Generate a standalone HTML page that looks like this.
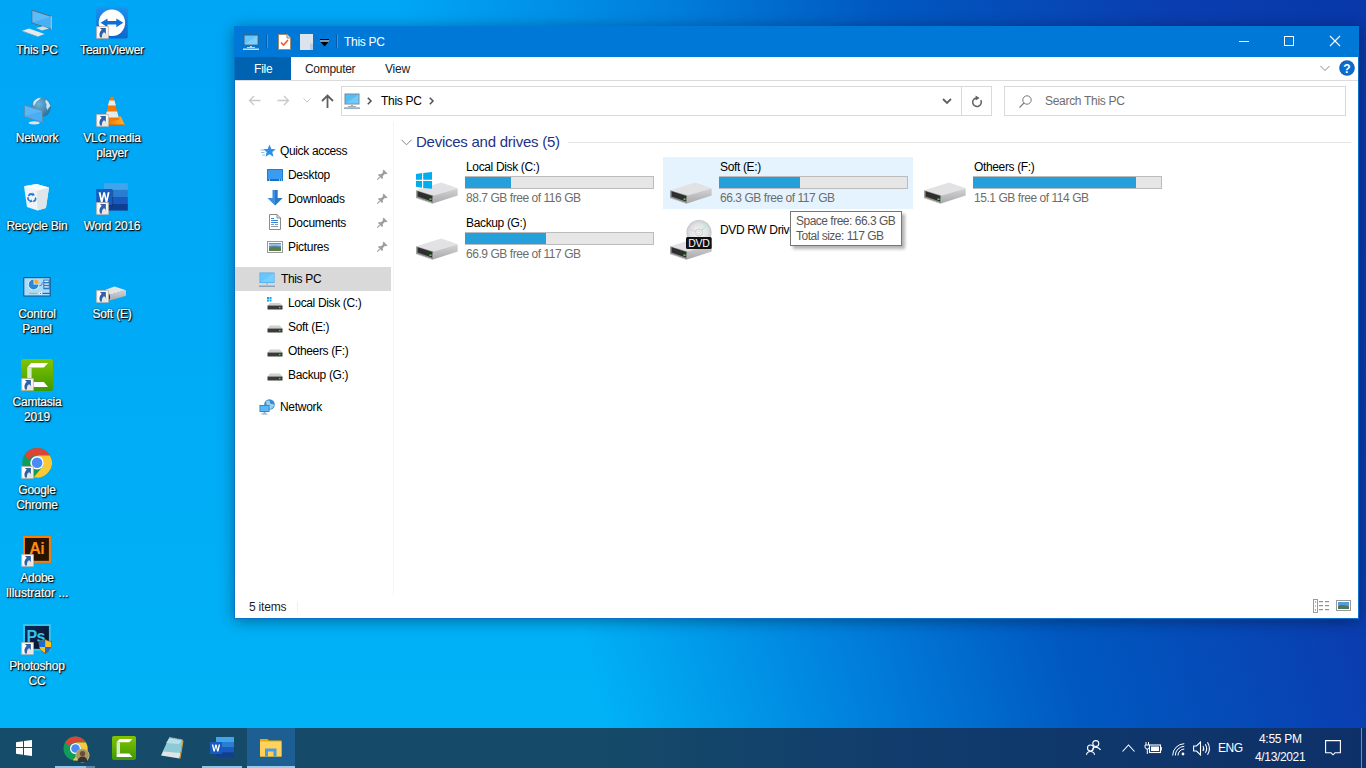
<!DOCTYPE html>
<html><head><meta charset="utf-8">
<style>
*{margin:0;padding:0;box-sizing:border-box}
html,body{width:1366px;height:768px;overflow:hidden}
body{position:relative;font-family:"Liberation Sans",sans-serif;font-size:12px;color:#000;
background:linear-gradient(74deg,rgba(0,160,240,0) 0px,rgba(0,160,240,0) 596px,#0080dc 845px,#0058c0 1057px,#0a3eb0 1332px,#0838aa 1525px),
linear-gradient(180deg,#00a6f6 0px,#00aaf6 300px,#00b2f6 728px);}
.a{position:absolute}
.t{position:absolute;white-space:nowrap;line-height:14px}
.dl{position:absolute;width:76px;text-align:center;color:#fff;font-size:12px;line-height:15px;letter-spacing:-0.2px;
 text-shadow:1px 1px 1px rgba(0,0,0,.95),0 0 2px rgba(0,0,0,.75),1px 1px 2px rgba(0,0,0,.6);-webkit-text-stroke:0.2px #fff}
svg{position:absolute;overflow:visible}
#win{left:234px;top:26px;width:1125px;height:593px;background:#fff;border:1px solid #0a72cc;
 box-shadow:0 2px 14px rgba(0,0,0,.38)}
#title{left:234px;top:26px;width:1125px;height:31px;background:#0078d7}
#tb{left:0;top:728px;width:1366px;height:40px;
 background:linear-gradient(90deg,#154c6a 0px,#154a68 600px,#113c6c 900px,#0d3068 1366px)}
.nav{color:#000}
.gray{color:#6d6d6d}
</style></head><body>

<!-- WINDOW -->
<div class="a" id="win"></div>
<div class="a" id="title"></div>
<!-- title icons -->
<svg style="left:243px;top:34px" width="16" height="16" viewBox="0 0 16 16">
 <rect x="0.5" y="0.5" width="15" height="11" fill="#4c5c6a"/>
 <rect x="1.5" y="1.5" width="13" height="9" fill="#62c6ff"/>
 <path d="M1.5 10.5 L14.5 1.5 L14.5 10.5Z" fill="#8fd8ff" opacity=".6"/>
 <rect x="7" y="12" width="2" height="1.5" fill="#c9d0d6"/>
 <rect x="4" y="13" width="8" height="1" fill="#c9d0d6"/>
 <rect x="0" y="14.5" width="16" height="1.5" fill="#d6dbe0"/>
</svg>
<div class="a" style="left:266px;top:35px;width:2px;height:13px;background:#0a5aa8;border-right:1px solid #3f95e0"></div>
<svg style="left:278px;top:34px" width="13" height="16" viewBox="0 0 13 16">
 <path d="M0.5 0.5 H9 L12.5 4 V15.5 H0.5Z" fill="#fff" stroke="#a08a70"/>
 <path d="M9 0.5 V4 H12.5" fill="#e0e0e0" stroke="#a08a70"/>
 <path d="M3 8.5 L5.5 11 L10 6" fill="none" stroke="#f05a28" stroke-width="1.6"/>
</svg>
<svg style="left:300px;top:34px" width="14" height="16" viewBox="0 0 14 16">
 <rect x="0" y="0" width="13" height="16" fill="#dbe3ee"/>
 <rect x="10" y="9.5" width="3" height="6.5" fill="#c2ccd9"/>
</svg>
<svg style="left:320px;top:39px" width="9" height="8" viewBox="0 0 9 8">
 <rect x="0" y="0" width="9" height="1.5" fill="#000"/>
 <rect x="0" y="1.5" width="9" height="0.8" fill="#fff"/>
 <path d="M0.5 3 H8.5 L4.5 7.5Z" fill="#000"/>
</svg>
<div class="a" style="left:336px;top:35px;width:2px;height:13px;background:#0a5aa8;border-right:1px solid #3f95e0"></div>
<div class="t" style="left:344px;top:35px;color:#fff;letter-spacing:-0.3px">This PC</div>
<!-- caption buttons -->
<div class="a" style="left:1239px;top:41px;width:10px;height:1px;background:#fff"></div>
<div class="a" style="left:1284px;top:36px;width:10px;height:10px;border:1px solid #fff"></div>
<svg style="left:1330px;top:36px" width="10" height="10" viewBox="0 0 10 10"><path d="M0 0L10 10M10 0L0 10" stroke="#fff" stroke-width="1.1"/></svg>

<!-- ribbon tabs -->
<div class="a" style="left:235px;top:57px;width:56px;height:23px;background:#0063b1"></div>
<div class="t" style="left:254px;top:62px;color:#fff;letter-spacing:-0.2px">File</div>
<div class="t" style="left:305px;top:62px;color:#222;letter-spacing:-0.3px">Computer</div>
<div class="t" style="left:385px;top:62px;color:#222;letter-spacing:-0.2px">View</div>
<div class="a" style="left:235px;top:80px;width:1123px;height:1px;background:#dadbdc"></div>
<svg style="left:1320px;top:65px" width="10" height="7" viewBox="0 0 10 7"><path d="M0.5 1 L5 5.5 L9.5 1" fill="none" stroke="#8a8a8a" stroke-width="1"/></svg>
<svg style="left:1339px;top:60px" width="16" height="16" viewBox="0 0 16 16">
 <circle cx="8" cy="8" r="7.8" fill="#1a5fb4"/><circle cx="8" cy="8" r="6.8" fill="#0a6cd0"/>
 <text x="8" y="12.5" font-family="Liberation Sans" font-weight="bold" font-size="12" fill="#fff" text-anchor="middle">?</text>
</svg>

<!-- address row -->
<svg style="left:248px;top:95px" width="13" height="11" viewBox="0 0 13 11"><path d="M12.5 5.5H1.5M6 1L1.5 5.5L6 10" fill="none" stroke="#c8c8c8" stroke-width="1.3"/></svg>
<svg style="left:277px;top:95px" width="13" height="11" viewBox="0 0 13 11"><path d="M0.5 5.5H11.5M7 1L11.5 5.5L7 10" fill="none" stroke="#c8c8c8" stroke-width="1.3"/></svg>
<svg style="left:303px;top:98px" width="8" height="5" viewBox="0 0 8 5"><path d="M0.5 0.5L4 4L7.5 0.5" fill="none" stroke="#c8c8c8" stroke-width="1"/></svg>
<svg style="left:321px;top:94px" width="13" height="14" viewBox="0 0 13 14"><path d="M6.5 14V1.5M1 7L6.5 1.5L12 7" fill="none" stroke="#5f5f5f" stroke-width="1.8"/></svg>
<div class="a" style="left:341px;top:86px;width:651px;height:30px;border:1px solid #d9d9d9"></div>
<div class="a" style="left:961px;top:87px;width:1px;height:28px;background:#d9d9d9"></div>
<svg style="left:344px;top:93px" width="16" height="16" viewBox="0 0 16 16">
 <rect x="0.5" y="0.5" width="15" height="11" fill="#7a8894"/>
 <rect x="1.5" y="1.5" width="13" height="9" fill="#53bdf5"/>
 <path d="M1.5 10.5 L14.5 1.5 L14.5 10.5Z" fill="#8fd8ff" opacity=".5"/>
 <rect x="7" y="12" width="2" height="1" fill="#a0aab4"/>
 <rect x="4" y="13" width="8" height="1" fill="#a0aab4"/>
 <rect x="0" y="14.5" width="16" height="1.2" fill="#6a8aa8"/>
</svg>
<svg style="left:367px;top:97px" width="5" height="8" viewBox="0 0 5 8"><path d="M0.8 0.8L4 4L0.8 7.2" fill="none" stroke="#505050" stroke-width="1.5"/></svg>
<div class="t" style="left:381px;top:94px;color:#000;letter-spacing:-0.3px">This PC</div>
<svg style="left:429px;top:97px" width="5" height="8" viewBox="0 0 5 8"><path d="M0.8 0.8L4 4L0.8 7.2" fill="none" stroke="#505050" stroke-width="1.5"/></svg>
<svg style="left:942px;top:98px" width="10" height="7" viewBox="0 0 10 7"><path d="M1 1L5 5L9 1" fill="none" stroke="#606060" stroke-width="1.8"/></svg>
<svg style="left:971px;top:96px" width="12" height="12" viewBox="0 0 12 12"><path d="M9.8 4.2 A4.3 4.3 0 1 1 5.6 1.9" fill="none" stroke="#606060" stroke-width="1.5"/><path d="M4.6 -0.6 L8.6 1.9 L4.6 4.4Z" fill="#606060"/></svg>
<div class="a" style="left:1004px;top:86px;width:342px;height:30px;border:1px solid #d9d9d9"></div>
<svg style="left:1019px;top:95px" width="13" height="13" viewBox="0 0 13 13"><circle cx="8" cy="5" r="4.2" fill="none" stroke="#7a7a7a" stroke-width="1"/><path d="M5 8L0.5 12.5" stroke="#7a7a7a" stroke-width="1.1"/></svg>
<div class="t" style="left:1045px;top:94px;color:#6d6d6d;letter-spacing:-0.3px">Search This PC</div>


<!-- NAV PANE -->
<div class="a" style="left:393px;top:122px;width:1px;height:473px;background:#f4f4f4"></div>
<svg style="left:260px;top:144px" width="16" height="14" viewBox="0 0 16 14">
 <path d="M9.5 0.5 L11.3 5 L15.8 5.2 L12.3 8.1 L13.5 12.8 L9.5 10.2 L5.5 12.8 L6.7 8.1 L3.2 5.2 L7.7 5Z" fill="#2f8de4"/>
 <path d="M0.5 6 H4 M1 8.5 H4.5 M2 11 H5" stroke="#6fb6f0" stroke-width="0.8"/>
</svg>
<div class="t" style="left:280px;top:144px;letter-spacing:-0.35px">Quick access</div>

<svg style="left:267px;top:169px" width="16" height="12" viewBox="0 0 16 12">
 <rect x="0" y="0" width="16" height="12" fill="#1a7fd6"/>
 <rect x="1" y="1" width="14" height="9.5" fill="#3a9cf0"/>
 <rect x="1" y="10.5" width="14" height="1" fill="#0d5aa8"/>
 <rect x="12" y="10.5" width="1" height="1" fill="#fff"/><rect x="14" y="10.5" width="1" height="1" fill="#fff"/><rect x="2" y="10.5" width="1" height="1" fill="#fff"/>
</svg>
<div class="t" style="left:288px;top:168px;letter-spacing:-0.3px">Desktop</div>
<svg style="left:267px;top:190px" width="16" height="16" viewBox="0 0 16 16">
 <path d="M5.5 0 H10.5 V8 H15.5 L8 15.5 L0.5 8 H5.5Z" fill="#3d8ee0"/>
 <path d="M8 0 H10.5 V8 H15.5 L8 15.5Z" fill="#2a78cc"/>
</svg>
<div class="t" style="left:288px;top:192px;letter-spacing:-0.3px">Downloads</div>
<svg style="left:269px;top:214px" width="12" height="16" viewBox="0 0 12 16">
 <path d="M0.5 0.5 H8 L11.5 4 V15.5 H0.5Z" fill="#fff" stroke="#8a8a8a"/>
 <path d="M8 0.5 V4 H11.5" fill="none" stroke="#8a8a8a"/>
 <rect x="2" y="4" width="3" height="1" fill="#3a86d8"/><rect x="2" y="6" width="7" height="1" fill="#3a86d8"/>
 <rect x="2" y="8" width="7" height="1" fill="#3a86d8"/><rect x="2" y="10" width="3" height="1" fill="#8a9aa8"/>
 <rect x="6" y="10" width="3" height="1" fill="#8a9aa8"/><rect x="2" y="12" width="7" height="1" fill="#8a9aa8"/>
</svg>
<div class="t" style="left:288px;top:216px;letter-spacing:-0.3px">Documents</div>
<svg style="left:267px;top:241px" width="16" height="12" viewBox="0 0 16 12">
 <rect x="0.5" y="0.5" width="15" height="11" fill="#fff" stroke="#9a9a9a"/>
 <rect x="2" y="2" width="12" height="8" fill="#5c8fc8"/>
 <path d="M2 7 Q6 4.5 14 6.5 V10 H2Z" fill="#5d7d4a"/>
 <path d="M2 3 H14 V5 Q8 4 2 5Z" fill="#9cc4ec"/>
</svg>
<div class="t" style="left:288px;top:240px;letter-spacing:-0.3px">Pictures</div>
<svg style="left:377px;top:169px" width="11" height="11" viewBox="0 0 11 11"><path d="M6.5 0.5 L10.5 4.5 L9.3 5.2 L7.8 5 L5.8 7 L6 9 L5 10 L1 6 L2 5 L4 5.2 L6 3.2 L5.8 1.7Z" fill="#9aa0a6"/><path d="M2.8 8.2 L0.3 10.7" stroke="#9aa0a6" stroke-width="1.2"/></svg>
<svg style="left:377px;top:193px" width="11" height="11" viewBox="0 0 11 11"><path d="M6.5 0.5 L10.5 4.5 L9.3 5.2 L7.8 5 L5.8 7 L6 9 L5 10 L1 6 L2 5 L4 5.2 L6 3.2 L5.8 1.7Z" fill="#9aa0a6"/><path d="M2.8 8.2 L0.3 10.7" stroke="#9aa0a6" stroke-width="1.2"/></svg>
<svg style="left:377px;top:217px" width="11" height="11" viewBox="0 0 11 11"><path d="M6.5 0.5 L10.5 4.5 L9.3 5.2 L7.8 5 L5.8 7 L6 9 L5 10 L1 6 L2 5 L4 5.2 L6 3.2 L5.8 1.7Z" fill="#9aa0a6"/><path d="M2.8 8.2 L0.3 10.7" stroke="#9aa0a6" stroke-width="1.2"/></svg>
<svg style="left:377px;top:241px" width="11" height="11" viewBox="0 0 11 11"><path d="M6.5 0.5 L10.5 4.5 L9.3 5.2 L7.8 5 L5.8 7 L6 9 L5 10 L1 6 L2 5 L4 5.2 L6 3.2 L5.8 1.7Z" fill="#9aa0a6"/><path d="M2.8 8.2 L0.3 10.7" stroke="#9aa0a6" stroke-width="1.2"/></svg>
<div class="a" style="left:235px;top:267px;width:156px;height:24px;background:#d9d9d9"></div>
<svg style="left:259px;top:272px" width="16" height="15" viewBox="0 0 16 15">
 <rect x="0.5" y="0.5" width="15" height="10.5" fill="#4aa8e8"/>
 <rect x="1.2" y="1.2" width="13.6" height="9" fill="#66c6ff"/>
 <path d="M1.2 10.2 L14.8 1.2 V10.2Z" fill="#86d4ff" opacity=".6"/>
 <rect x="7" y="11.5" width="2" height="1.2" fill="#a8b4c0"/>
 <rect x="0" y="13.6" width="16" height="1.2" fill="#7a96b4"/>
</svg>
<div class="t" style="left:281px;top:272px;letter-spacing:-0.35px">This PC</div>
<svg style="left:267px;top:297px" width="16" height="13" viewBox="0 0 16 13">
 <rect x="0" y="0" width="2" height="2" fill="#1aa0f0"/><rect x="2.5" y="0" width="2" height="2" fill="#1aa0f0"/>
 <rect x="0" y="2.5" width="2" height="2" fill="#1aa0f0"/><rect x="2.5" y="2.5" width="2" height="2" fill="#1aa0f0"/>
 <path d="M3 6 H13 L15.5 8.5 H0.5Z" fill="#cfcfcf"/>
 <rect x="0.5" y="8.5" width="15" height="4" fill="#3a3a3a"/>
 <rect x="12" y="10" width="1.5" height="1.2" fill="#3ce03c"/>
</svg>
<div class="t" style="left:288px;top:296px;letter-spacing:-0.35px">Local Disk (C:)</div>
<svg style="left:267px;top:325px" width="16" height="8" viewBox="0 0 16 8"><path d="M3 0.5 H13 L15.5 3.5 H0.5Z" fill="#cfcfcf"/><rect x="0.5" y="3.5" width="15" height="4" fill="#3a3a3a"/><rect x="12" y="5" width="1.5" height="1.2" fill="#3ce03c"/></svg>
<svg style="left:267px;top:349px" width="16" height="8" viewBox="0 0 16 8"><path d="M3 0.5 H13 L15.5 3.5 H0.5Z" fill="#cfcfcf"/><rect x="0.5" y="3.5" width="15" height="4" fill="#3a3a3a"/><rect x="12" y="5" width="1.5" height="1.2" fill="#3ce03c"/></svg>
<svg style="left:267px;top:373px" width="16" height="8" viewBox="0 0 16 8"><path d="M3 0.5 H13 L15.5 3.5 H0.5Z" fill="#cfcfcf"/><rect x="0.5" y="3.5" width="15" height="4" fill="#3a3a3a"/><rect x="12" y="5" width="1.5" height="1.2" fill="#3ce03c"/></svg>
<div class="t" style="left:288px;top:320px;letter-spacing:-0.3px">Soft (E:)</div>
<div class="t" style="left:288px;top:344px;letter-spacing:-0.35px">Otheers (F:)</div>
<div class="t" style="left:288px;top:368px;letter-spacing:-0.35px">Backup (G:)</div>
<svg style="left:259px;top:399px" width="16" height="16" viewBox="0 0 16 16">
 <circle cx="10.5" cy="5.5" r="5.3" fill="#3a8cc8"/>
 <path d="M7 2.5 Q9 1 11 2 Q10 4 12 5 Q14 4.5 15.5 6 Q14 9 11 10.5 Q10 8 8 8.5Z" fill="#b8e0f8" opacity=".8"/>
 <rect x="0.5" y="6" width="10" height="7" fill="#1e80d8"/>
 <rect x="1.3" y="6.8" width="8.4" height="5.4" fill="#5ab8f8"/>
 <rect x="4.5" y="13" width="2" height="1.5" fill="#8aa0b4"/>
 <rect x="2.5" y="14.5" width="6" height="1" fill="#8aa0b4"/>
</svg>
<div class="t" style="left:280px;top:400px;letter-spacing:-0.3px">Network</div>

<!-- CONTENT -->
<div class="t" style="left:416px;top:133px;font-size:15px;line-height:18px;color:#1e3287;letter-spacing:-0.25px">Devices and drives (5)</div>
<svg style="left:401px;top:139px" width="11" height="7" viewBox="0 0 11 7"><path d="M0.5 0.8 L5.5 5.8 L10.5 0.8" fill="none" stroke="#858585" stroke-width="1"/></svg>
<div class="a" style="left:568px;top:142px;width:783px;height:1px;background:#e5e5e5"></div>
<div class="a" style="left:663px;top:157px;width:250px;height:52px;background:#e5f3ff"></div>
<svg style="left:415px;top:181px" width="44" height="24" viewBox="0 0 44 24">
 <defs><linearGradient id="rf" x1="0" y1="0" x2="0" y2="1"><stop offset="0" stop-color="#d4d4d6"/><stop offset="1" stop-color="#a9a9ab"/></linearGradient></defs>
 <path d="M1.2 9.2 L26.2 1.5 L42.7 7.3 L18.5 14.6Z" fill="#e2e2e4"/>
 <path d="M18.5 14.6 L42.7 7.3 L42.7 14.6 L18 22.5Z" fill="url(#rf)"/>
 <path d="M1.2 9.2 L18.5 14.6 L18 22.5 L1.2 16.7Z" fill="#8c8c8c"/>
 <path d="M2.6 10.3 L17.2 14.9 L17 20.6 L2.6 15.6Z" fill="#2e2e2e"/>
 <path d="M1.2 16.7 L18 22.5 L18 23 L1.2 17.3Z" fill="#b8b8b8"/>
 <rect x="14.5" y="17.4" width="2" height="1.6" fill="#2ee82e"/>
</svg>
<svg style="left:416px;top:172px" width="17" height="17" viewBox="0 0 17 17">
 <path d="M0 2 L6 1 V7.8 H0Z M7.2 0.9 L16 0 V7.8 H7.2Z M0 9 H6 V15.8 L0 14.8Z M7.2 9 H16 V16.8 L7.2 16Z" fill="#00adef"/>
</svg>
<div class="t" style="left:466px;top:160px;letter-spacing:-0.35px">Local Disk (C:)</div>
<div class="a" style="left:465px;top:176px;width:189px;height:13px;background:#e6e6e6;border:1px solid #bcbcbc"><div class="a" style="left:-1px;top:0;width:46px;height:11px;background:#26a0da"></div></div>
<div class="t gray" style="left:466px;top:191px;letter-spacing:-0.45px">88.7 GB free of 116 GB</div>
<svg style="left:669px;top:181px" width="44" height="24" viewBox="0 0 44 24">
 <defs><linearGradient id="rf" x1="0" y1="0" x2="0" y2="1"><stop offset="0" stop-color="#d4d4d6"/><stop offset="1" stop-color="#a9a9ab"/></linearGradient></defs>
 <path d="M1.2 9.2 L26.2 1.5 L42.7 7.3 L18.5 14.6Z" fill="#e2e2e4"/>
 <path d="M18.5 14.6 L42.7 7.3 L42.7 14.6 L18 22.5Z" fill="url(#rf)"/>
 <path d="M1.2 9.2 L18.5 14.6 L18 22.5 L1.2 16.7Z" fill="#8c8c8c"/>
 <path d="M2.6 10.3 L17.2 14.9 L17 20.6 L2.6 15.6Z" fill="#2e2e2e"/>
 <path d="M1.2 16.7 L18 22.5 L18 23 L1.2 17.3Z" fill="#b8b8b8"/>
 <rect x="14.5" y="17.4" width="2" height="1.6" fill="#2ee82e"/>
</svg>
<div class="t" style="left:720px;top:160px;letter-spacing:-0.35px">Soft (E:)</div>
<div class="a" style="left:719px;top:176px;width:189px;height:13px;background:#e6e6e6;border:1px solid #bcbcbc"><div class="a" style="left:-1px;top:0;width:81px;height:11px;background:#26a0da"></div></div>
<div class="t gray" style="left:720px;top:191px;letter-spacing:-0.45px">66.3 GB free of 117 GB</div>
<svg style="left:923px;top:181px" width="44" height="24" viewBox="0 0 44 24">
 <defs><linearGradient id="rf" x1="0" y1="0" x2="0" y2="1"><stop offset="0" stop-color="#d4d4d6"/><stop offset="1" stop-color="#a9a9ab"/></linearGradient></defs>
 <path d="M1.2 9.2 L26.2 1.5 L42.7 7.3 L18.5 14.6Z" fill="#e2e2e4"/>
 <path d="M18.5 14.6 L42.7 7.3 L42.7 14.6 L18 22.5Z" fill="url(#rf)"/>
 <path d="M1.2 9.2 L18.5 14.6 L18 22.5 L1.2 16.7Z" fill="#8c8c8c"/>
 <path d="M2.6 10.3 L17.2 14.9 L17 20.6 L2.6 15.6Z" fill="#2e2e2e"/>
 <path d="M1.2 16.7 L18 22.5 L18 23 L1.2 17.3Z" fill="#b8b8b8"/>
 <rect x="14.5" y="17.4" width="2" height="1.6" fill="#2ee82e"/>
</svg>
<div class="t" style="left:974px;top:160px;letter-spacing:-0.35px">Otheers (F:)</div>
<div class="a" style="left:973px;top:176px;width:189px;height:13px;background:#e6e6e6;border:1px solid #bcbcbc"><div class="a" style="left:-1px;top:0;width:163px;height:11px;background:#26a0da"></div></div>
<div class="t gray" style="left:974px;top:191px;letter-spacing:-0.45px">15.1 GB free of 114 GB</div>
<svg style="left:415px;top:237px" width="44" height="24" viewBox="0 0 44 24">
 <defs><linearGradient id="rf" x1="0" y1="0" x2="0" y2="1"><stop offset="0" stop-color="#d4d4d6"/><stop offset="1" stop-color="#a9a9ab"/></linearGradient></defs>
 <path d="M1.2 9.2 L26.2 1.5 L42.7 7.3 L18.5 14.6Z" fill="#e2e2e4"/>
 <path d="M18.5 14.6 L42.7 7.3 L42.7 14.6 L18 22.5Z" fill="url(#rf)"/>
 <path d="M1.2 9.2 L18.5 14.6 L18 22.5 L1.2 16.7Z" fill="#8c8c8c"/>
 <path d="M2.6 10.3 L17.2 14.9 L17 20.6 L2.6 15.6Z" fill="#2e2e2e"/>
 <path d="M1.2 16.7 L18 22.5 L18 23 L1.2 17.3Z" fill="#b8b8b8"/>
 <rect x="14.5" y="17.4" width="2" height="1.6" fill="#2ee82e"/>
</svg>
<div class="t" style="left:466px;top:216px;letter-spacing:-0.35px">Backup (G:)</div>
<div class="a" style="left:465px;top:232px;width:189px;height:13px;background:#e6e6e6;border:1px solid #bcbcbc"><div class="a" style="left:-1px;top:0;width:81px;height:11px;background:#26a0da"></div></div>
<div class="t gray" style="left:466px;top:247px;letter-spacing:-0.45px">66.9 GB free of 117 GB</div>
<svg style="left:669px;top:237px" width="44" height="24" viewBox="0 0 44 24">
 <defs><linearGradient id="rf" x1="0" y1="0" x2="0" y2="1"><stop offset="0" stop-color="#d4d4d6"/><stop offset="1" stop-color="#a9a9ab"/></linearGradient></defs>
 <path d="M1.2 9.2 L26.2 1.5 L42.7 7.3 L18.5 14.6Z" fill="#e2e2e4"/>
 <path d="M18.5 14.6 L42.7 7.3 L42.7 14.6 L18 22.5Z" fill="url(#rf)"/>
 <path d="M1.2 9.2 L18.5 14.6 L18 22.5 L1.2 16.7Z" fill="#8c8c8c"/>
 <path d="M2.6 10.3 L17.2 14.9 L17 20.6 L2.6 15.6Z" fill="#2e2e2e"/>
 <path d="M1.2 16.7 L18 22.5 L18 23 L1.2 17.3Z" fill="#b8b8b8"/>
 <rect x="14.5" y="17.4" width="2" height="1.6" fill="#2ee82e"/>
</svg>
<svg style="left:686px;top:217px" width="26" height="33" viewBox="0 0 26 33">
 <defs><radialGradient id="cd" cx=".5" cy=".5" r=".5"><stop offset="0" stop-color="#f4f6f6"/><stop offset=".7" stop-color="#dfe3e3"/><stop offset="1" stop-color="#c8cccc"/></radialGradient></defs>
 <circle cx="13" cy="15.5" r="12.3" fill="url(#cd)" stroke="#c0c4c4" stroke-width=".6"/>
 <path d="M13 15.5 L21.5 8" stroke="#a8f0d8" stroke-width="1.2"/>
 <path d="M13 15.5 L2.5 12" stroke="#f0c0f0" stroke-width="1.2"/>
 <circle cx="13" cy="15.5" r="3.5" fill="#f0f0f0" stroke="#c4c4c4" stroke-width=".8"/>
 <circle cx="13" cy="15.5" r="1.3" fill="#fff" stroke="#c4c4c4" stroke-width=".6"/>
 <rect x="0" y="20" width="25.7" height="12" rx="1.5" fill="#111"/>
 <text x="12.9" y="30" font-family="Liberation Sans" font-size="10.5" fill="#fff" text-anchor="middle" letter-spacing="-0.3">DVD</text>
</svg>
<div class="t" style="left:720px;top:223px;letter-spacing:-0.35px">DVD RW Drive</div>
<div class="a" style="left:790px;top:211px;width:112px;height:35px;background:#fff;border:1px solid #767676;box-shadow:3px 3px 3px rgba(0,0,0,.3)"></div>
<div class="t" style="left:796px;top:214px;color:#575757;line-height:15px;letter-spacing:-0.5px">Space free: 66.3 GB<br>Total size: 117 GB</div>
<div class="t" style="left:249px;top:600px;color:#1e1e1e;letter-spacing:-0.2px">5 items</div>
<div class="a" style="left:297px;top:601px;width:1px;height:11px;background:#f0f0f0"></div>
<svg style="left:1313px;top:599px" width="17" height="14" viewBox="0 0 17 14">
 <rect x="0.5" y="0.5" width="4" height="13" fill="#fff" stroke="#9a9a9a"/>
 <rect x="2" y="2.5" width="1" height="1" fill="#2a7a4a"/><rect x="2" y="6.5" width="1" height="1" fill="#4a8af0"/><rect x="2" y="10.5" width="1" height="1" fill="#e02020"/>
 <path d="M6 2.7H10M12 2.7H16M6 6.7H10M12 6.7H16M6 10.7H10M12 10.7H16" stroke="#7a7a7a" stroke-width="1"/>
</svg>
<svg style="left:1336px;top:600px" width="15" height="11" viewBox="0 0 15 11">
 <rect x="0.5" y="0.5" width="14" height="10" fill="#fff" stroke="#9a9a9a"/>
 <rect x="2" y="2" width="11" height="7" fill="#5a9ad8"/>
 <path d="M2 6 Q6 4 13 6.5 V9 H2Z" fill="#4a7a5a"/>
</svg>
<!-- DESKTOP -->
<svg width="0" height="0" style="position:absolute">
<defs>
<symbol id="sc" viewBox="0 0 13 13">
 <rect x="0.5" y="0.5" width="12" height="12" fill="#fff" stroke="#c9b8a8"/>
 <path d="M6.5 7 Q9 7.5 11.5 7 V12 H6Z" fill="#e6e6e6"/>
 <path d="M3.8 1.8 H10 V8 L8.2 6.2 Q5.6 7.6 5.9 11.8 H4 Q1.9 7.5 5.7 3.7Z" fill="#3060a6"/>
</symbol>
<linearGradient id="tvg" x1="0" y1="0" x2="0" y2="1"><stop offset="0" stop-color="#1e90ee"/><stop offset="1" stop-color="#0a66cc"/></linearGradient>
<linearGradient id="cmg" x1="0" y1="0" x2="0" y2="1"><stop offset="0" stop-color="#84c400"/><stop offset="1" stop-color="#3c9a00"/></linearGradient>
<radialGradient id="glb" cx=".4" cy=".35" r=".7"><stop offset="0" stop-color="#6ab4dc"/><stop offset="1" stop-color="#2a6e98"/></radialGradient>
<linearGradient id="drg" x1="0" y1="0" x2="0" y2="1"><stop offset="0" stop-color="#d4d4d6"/><stop offset="1" stop-color="#a9a9ab"/></linearGradient>
<linearGradient id="psg" x1="0" y1="0" x2="1" y2="1"><stop offset="0" stop-color="#0e2a5a"/><stop offset="1" stop-color="#061024"/></linearGradient>
</defs></svg>
<svg style="left:21px;top:7px" width="32" height="32" viewBox="0 0 32 32">
 <path d="M10.5 2.6 L30.6 9 L30.6 22.5 L10.5 16.2Z" fill="#5a6a78"/>
 <path d="M11.3 3.8 L29.8 9.7 L29.8 21.3 L11.3 15.4Z" fill="#5cbcf8"/>
 <path d="M11.3 15.4 L29.8 9.7 L29.8 21.3Z" fill="#40acf4" opacity=".8"/>
 <path d="M29.8 9 L30.8 9.3 L30.8 22.6 L29.8 22.4Z" fill="#c0c8d0"/>
 <path d="M15 21 L22 19.2 L28 21.5 L21 23.6Z" fill="#d8dcdf"/>
 <path d="M1.1 23.8 L8.1 21.4 L23.6 27 L17 29.4Z" fill="#e6e8ea"/>
 <path d="M1.1 23.8 L17 29.4 L17 30 L1.1 24.4Z" fill="#a0a8ae"/>
</svg>
<div class="dl" style="left:-1px;top:43px">This PC</div>
<svg style="left:96px;top:7px" width="32" height="32" viewBox="0 0 32 32">
 <rect x="0.25" y="0.2" width="31.5" height="31.3" rx="2" fill="url(#tvg)"/>
 <circle cx="15.9" cy="15.8" r="13.2" fill="#fff"/>
 <path d="M4.6 15.8 L11.5 11.4 V14 H20.3 V11.4 L27.3 15.8 L20.3 20.2 V17.6 H11.5 V20.2Z" fill="#0e6fd6"/>
<g transform="translate(0.25,19.2) scale(0.9615)"><rect x="0.5" y="0.5" width="12" height="12" fill="#fff" stroke="#c9b8a8"/><path d="M6.5 7 Q9 7.5 11.5 7 V12 H6Z" fill="#e6e6e6"/><path d="M3.8 1.8 H10 V8 L8.2 6.2 Q5.6 7.6 5.9 11.8 H4 Q1.9 7.5 5.7 3.7Z" fill="#3060a6"/></g></svg>
<div class="dl" style="left:74px;top:43px">TeamViewer</div>
<svg style="left:21px;top:95px" width="32" height="32" viewBox="0 0 32 32">
 <circle cx="20" cy="12.1" r="10" fill="url(#glb)"/>
 <path d="M13 6 Q16 3 20 2.6 Q18.5 5 15.5 6.5 Q14 9 13 11 Q11.5 9 13 6Z" fill="#d8eef8"/>
 <path d="M25 4.5 Q28.5 7 29.5 11 Q27.5 12.5 26.5 15 Q24.5 12 25.5 9 Q23.5 7 25 4.5Z" fill="#c8e6f4"/>
 <path d="M3.3 10 L21.6 15.5 L21.6 27.7 L3.3 21.7Z" fill="#7a8a98"/>
 <path d="M4 11 L20.9 16.1 L20.9 26.8 L4 21Z" fill="#5ab8f8"/>
 <path d="M4 21 L20.9 16.1 L20.9 26.8Z" fill="#44aaf4" opacity=".7"/>
 <ellipse cx="13.2" cy="27.8" rx="5.5" ry="1.6" fill="#e0e4e8"/>
</svg>
<div class="dl" style="left:-1px;top:131px">Network</div>
<svg style="left:96px;top:95px" width="32" height="32" viewBox="0 0 32 32">
 <defs><linearGradient id="vb" x1="0" y1="0" x2="1" y2="0"><stop offset="0" stop-color="#e86a00"/><stop offset=".6" stop-color="#f89a20"/><stop offset="1" stop-color="#ffb030"/></linearGradient></defs>
 <path d="M9 21.5 L25 21.5 L28.8 30.2 L28.5 31 L9 31Z" fill="url(#vb)"/>
 <path d="M9 29.5 L28.6 29.5 L28.5 31 L9 31Z" fill="#e06000"/>
 <path d="M14.2 3 Q15.9 0.2 17.6 3 L23.2 24.5 Q16 27 8.6 24.5Z" fill="#f27a06"/>
 <path d="M13.3 5.4 L18.5 5.4 L19.9 10.6 L11.9 10.6Z" fill="#e4ecf0"/>
 <path d="M10.8 16.4 L21.1 16.4 L22.7 22.6 L9.3 22.6Z" fill="#e4ecf0"/>
<g transform="translate(0.25,19.2) scale(0.9615)"><rect x="0.5" y="0.5" width="12" height="12" fill="#fff" stroke="#c9b8a8"/><path d="M6.5 7 Q9 7.5 11.5 7 V12 H6Z" fill="#e6e6e6"/><path d="M3.8 1.8 H10 V8 L8.2 6.2 Q5.6 7.6 5.9 11.8 H4 Q1.9 7.5 5.7 3.7Z" fill="#3060a6"/></g></svg>
<div class="dl" style="left:74px;top:131px">VLC media<br>player</div>
<svg style="left:21px;top:183px" width="32" height="32" viewBox="0 0 32 32">
 <path d="M3 3.3 L15.5 1 L28 4.6 L24.9 25 L16.5 27.5 L6 24Z" fill="#f0f4f6"/>
 <path d="M15.5 7.5 L28 4.6 L24.9 25 L16.5 27.5Z" fill="#dfe6ea"/>
 <path d="M3 3.3 L15.5 1 L28 4.6 L16.5 7.5Z" fill="#fafcfd"/>
 <path d="M6.8 12.5 A4 4 0 0 1 12 10.5 L11.5 9 L14 12.2 L10.5 13 L11 12 A2.6 2.6 0 0 0 8 13.5Z" fill="#1f7ad8"/>
 <path d="M6 14.5 L7.8 14 A3 3 0 0 0 10 17.5 L9.8 16 L11.8 18.8 L8.4 19.5 L9 18.6 A4.3 4.3 0 0 1 6 14.5Z" fill="#1f7ad8"/>
 <path d="M14.5 14 L15.5 15.5 A4 4 0 0 1 12.5 19.2 L12 17.8 A2.6 2.6 0 0 0 13.8 15Z" fill="#1f7ad8"/>
</svg>
<div class="dl" style="left:-1px;top:219px">Recycle Bin</div>
<svg style="left:96px;top:183px" width="32" height="32" viewBox="0 0 32 32">
 <rect x="8" y="0.3" width="23.8" height="6.6" fill="#41a5ee"/>
 <rect x="8" y="6.9" width="23.8" height="7" fill="#2b7cd3"/>
 <rect x="8" y="13.9" width="23.8" height="7" fill="#185abd"/>
 <rect x="8" y="20.9" width="23.8" height="6.7" fill="#103f91"/>
 <rect x="1.2" y="7" width="16" height="16.2" fill="#000" opacity=".25"/>
 <rect x="0.25" y="6" width="16" height="16.2" fill="#185abd"/>
 <path d="M2.6 9.2 H4.6 L5.8 15.5 L7.3 9.2 H9 L10.4 15.5 L11.7 9.2 H13.6 L11.4 19 H9.6 L8.1 12.6 L6.6 19 H4.8Z" fill="#fff"/>
<g transform="translate(0.25,19.2) scale(0.9615)"><rect x="0.5" y="0.5" width="12" height="12" fill="#fff" stroke="#c9b8a8"/><path d="M6.5 7 Q9 7.5 11.5 7 V12 H6Z" fill="#e6e6e6"/><path d="M3.8 1.8 H10 V8 L8.2 6.2 Q5.6 7.6 5.9 11.8 H4 Q1.9 7.5 5.7 3.7Z" fill="#3060a6"/></g></svg>
<div class="dl" style="left:74px;top:219px">Word 2016</div>
<svg style="left:21px;top:271px" width="32" height="32" viewBox="0 0 32 32">
 <rect x="2.3" y="6.2" width="27.3" height="19.3" fill="#1a4c80"/>
 <rect x="3.3" y="7.2" width="25.3" height="17.3" fill="#a8dcfa"/>
 <circle cx="12.6" cy="13.5" r="5.6" fill="#fff" opacity=".8"/>
 <path d="M12.6 13.5 V8.6 A4.9 4.9 0 1 0 17.5 13.5Z" fill="#2a88d8"/>
 <path d="M13.4 12.7 V8.2 A4.5 4.5 0 0 1 17.9 12.7Z" fill="#f5a623"/>
 <path d="M18.5 14.5 H20 Q21 14.5 21 12.5 Q21 11.5 22.3 11.5" fill="none" stroke="#2a78c8" stroke-width=".8"/>
 <rect x="22.3" y="8.6" width="6.5" height="9.7" fill="#2a78c8"/>
 <rect x="23.3" y="9.6" width="4.5" height="1.4" fill="#dff0ff"/>
 <rect x="23.3" y="12.4" width="4.5" height="1.4" fill="#dff0ff"/>
 <rect x="23.3" y="15.2" width="4.5" height="1.4" fill="#dff0ff"/>
 <rect x="27" y="9.7" width="1" height="1" fill="#f08020"/>
 <rect x="8" y="21.8" width="8" height="1.2" fill="#f5a623"/>
 <circle cx="19.6" cy="22.4" r="1.4" fill="#fff"/><circle cx="19.6" cy="22.4" r=".6" fill="#2a78c8"/>
 <rect x="21.5" y="21.8" width="8.5" height="1.2" fill="#1a6ac8"/>
</svg>
<div class="dl" style="left:-1px;top:307px">Control<br>Panel</div>
<svg style="left:96px;top:271px" width="32" height="32" viewBox="0 0 32 32">
 <path d="M9.6 18.7 L18.5 15.6 L30 19.2 L14 23.8Z" fill="#e4e4e6"/>
 <path d="M14 23.8 L30 19.2 L30 24.7 L14 29.5Z" fill="url(#drg)"/>
 <path d="M9.6 18.7 L14 23.8 L14 29.5 L9.6 25Z" fill="#8a8a8a"/>
 <path d="M12.6 23.5 L13.8 24.6 L13.8 28.3 L12.6 27.3Z" fill="#222"/>
<g transform="translate(0.25,19.2) scale(0.9615)"><rect x="0.5" y="0.5" width="12" height="12" fill="#fff" stroke="#c9b8a8"/><path d="M6.5 7 Q9 7.5 11.5 7 V12 H6Z" fill="#e6e6e6"/><path d="M3.8 1.8 H10 V8 L8.2 6.2 Q5.6 7.6 5.9 11.8 H4 Q1.9 7.5 5.7 3.7Z" fill="#3060a6"/></g></svg>
<div class="dl" style="left:74px;top:307px">Soft (E)</div>
<svg style="left:21px;top:359px" width="32" height="32" viewBox="0 0 32 32">
 <rect x="0" y="0" width="32" height="32" rx="2.5" fill="url(#cmg)"/>
 <path d="M6.2 8.5 L10.1 4.1 H27 L22.9 8.5Z" fill="#fff"/>
 <path d="M6.2 8.5 H10.6 V19 H6.2Z" fill="#d6ecc6"/>
 <path d="M6.2 23.1 H22.9 L27 28 H6.2Z" fill="#fff"/>
<g transform="translate(0.25,19.2) scale(0.9615)"><rect x="0.5" y="0.5" width="12" height="12" fill="#fff" stroke="#c9b8a8"/><path d="M6.5 7 Q9 7.5 11.5 7 V12 H6Z" fill="#e6e6e6"/><path d="M3.8 1.8 H10 V8 L8.2 6.2 Q5.6 7.6 5.9 11.8 H4 Q1.9 7.5 5.7 3.7Z" fill="#3060a6"/></g></svg>
<div class="dl" style="left:-1px;top:395px">Camtasia<br>2019</div>
<svg style="left:21px;top:447px" width="32" height="32" viewBox="0 0 32 32">
 <circle cx="16.1" cy="15.8" r="14.8" fill="#0f9d58"/>
 <path d="M16.1 1 A14.8 14.8 0 0 1 28.9 8.4 L16.1 8.4 Q9.5 8.4 8.4 13 L3.3 8.4 A14.8 14.8 0 0 1 16.1 1Z" fill="#db4437"/>
 <path d="M28.9 8.4 A14.8 14.8 0 0 1 12.8 30.2 L19.6 22 Q23 19 22.9 15.8 Q22.9 11 16.1 8.4Z" fill="#fcc934"/>
 <circle cx="16.1" cy="15.8" r="6.8" fill="#fff"/>
 <circle cx="16.1" cy="15.8" r="5.3" fill="#4c8bf5"/>
<g transform="translate(0.25,19.2) scale(0.9615)"><rect x="0.5" y="0.5" width="12" height="12" fill="#fff" stroke="#c9b8a8"/><path d="M6.5 7 Q9 7.5 11.5 7 V12 H6Z" fill="#e6e6e6"/><path d="M3.8 1.8 H10 V8 L8.2 6.2 Q5.6 7.6 5.9 11.8 H4 Q1.9 7.5 5.7 3.7Z" fill="#3060a6"/></g></svg>
<div class="dl" style="left:-1px;top:483px">Google<br>Chrome</div>
<svg style="left:21px;top:535px" width="32" height="32" viewBox="0 0 32 32">
 <rect x="2" y="1" width="27.9" height="26.8" fill="#ff7c00"/>
 <rect x="4" y="3" width="23.9" height="22.8" fill="#261300"/>
 <text x="15.8" y="18.8" font-family="Liberation Sans" font-size="16" font-weight="bold" fill="#ff8a10" text-anchor="middle" letter-spacing="-0.4">Ai</text>
<g transform="translate(0.25,19.2) scale(0.9615)"><rect x="0.5" y="0.5" width="12" height="12" fill="#fff" stroke="#c9b8a8"/><path d="M6.5 7 Q9 7.5 11.5 7 V12 H6Z" fill="#e6e6e6"/><path d="M3.8 1.8 H10 V8 L8.2 6.2 Q5.6 7.6 5.9 11.8 H4 Q1.9 7.5 5.7 3.7Z" fill="#3060a6"/></g></svg>
<div class="dl" style="left:-1px;top:571px">Adobe<br><span style="letter-spacing:0">Illustrator ...</span></div>
<svg style="left:21px;top:623px" width="32" height="32" viewBox="0 0 32 32">
 <rect x="2" y="1" width="27.9" height="26.8" fill="#31c5f0"/>
 <rect x="4" y="3" width="23.9" height="22.8" fill="url(#psg)"/>
 <text x="14.6" y="18.8" font-family="Liberation Sans" font-size="16" font-weight="bold" fill="#31c5f0" text-anchor="middle" letter-spacing="-0.6">Ps</text>
 <path d="M17.4 18 Q21 17.8 24.2 16 Q27.4 17.8 31 18 Q31 27.5 24.2 31 Q17.4 27.5 17.4 18Z" fill="#7a5a30"/>
 <path d="M18.2 18.7 Q21.2 18.5 24.2 17 V24 H18.4 Q18.2 21 18.2 18.7Z" fill="#1a6ad8"/>
 <path d="M24.2 17 Q27.2 18.5 30.2 18.7 Q30.2 21 30 24 H24.2Z" fill="#f8c020"/>
 <path d="M18.4 24 H24.2 V30 Q19.5 27.5 18.4 24Z" fill="#f8c020"/>
 <path d="M24.2 24 H30 Q29 27.5 24.2 30Z" fill="#1a6ad8"/>
<g transform="translate(0.25,19.2) scale(0.9615)"><rect x="0.5" y="0.5" width="12" height="12" fill="#fff" stroke="#c9b8a8"/><path d="M6.5 7 Q9 7.5 11.5 7 V12 H6Z" fill="#e6e6e6"/><path d="M3.8 1.8 H10 V8 L8.2 6.2 Q5.6 7.6 5.9 11.8 H4 Q1.9 7.5 5.7 3.7Z" fill="#3060a6"/></g></svg>
<div class="dl" style="left:-1px;top:659px">Photoshop<br>CC</div>
<!-- TASKBAR -->
<div class="a" id="tb"></div>
<svg style="left:16px;top:740px" width="16" height="16" viewBox="0 0 16 16"><path d="M0 2.2 L7 1.3 V7 H0Z M8 1.1 L16 0 V7 H8Z M0 8 H7 V14.7 L0 13.8Z M8 8 H16 V16 L8 14.9Z" fill="#fff"/></svg>
<svg style="left:63px;top:736px" width="27" height="27" viewBox="0 0 27 27">
 <circle cx="12.5" cy="12.5" r="12" fill="#0f9d58"/>
 <path d="M12.5 0.5 A12 12 0 0 1 22.9 6.5 L12.5 6.5 Q7 6.5 6.3 10.5 L2.1 6.5 A12 12 0 0 1 12.5 0.5Z" fill="#db4437"/>
 <path d="M22.9 6.5 A12 12 0 0 1 9.8 24.2 L15.5 17.8 Q18.2 15.5 18.2 12.5 Q18.2 8.5 12.5 6.5Z" fill="#fcc934"/>
 <circle cx="12.5" cy="12.5" r="5.5" fill="#fff"/><circle cx="12.5" cy="12.5" r="4.3" fill="#4c8bf5"/>
 <circle cx="19.5" cy="19.5" r="7" fill="#c8b880"/>
 <circle cx="19.5" cy="19.5" r="6.2" fill="#a89860"/>
 <path d="M14.5 26 Q15 20.5 19.5 20.5 Q24 20.5 24.5 26Z" fill="#333"/>
 <circle cx="19.5" cy="17.5" r="2.6" fill="#6a4a38"/>
</svg>
<div class="a" style="left:55px;top:766px;width:31px;height:2px;background:#8fc5ec"></div>
<div class="a" style="left:86px;top:766px;width:9px;height:2px;background:#5a88ac"></div>
<svg style="left:112px;top:736px" width="24" height="24" viewBox="0 0 24 24">
 <rect x="0" y="0" width="24" height="24" rx="2" fill="url(#cmg)"/>
 <path d="M4.6 6.3 L7.6 3 H20.4 L17.3 6.3Z" fill="#fff"/>
 <path d="M4.6 6.3 H8 V17.5 H4.6Z" fill="#d6ecc6"/>
 <path d="M4.6 17.5 H17.3 L20.4 21 H4.6Z" fill="#fff"/>
</svg>
<svg style="left:160px;top:736px" width="24" height="24" viewBox="0 0 24 24">
 <path d="M9.5 1.5 L22.5 4 L19.5 22.5 L1 19.5Z" fill="#dfe4e6"/>
 <path d="M9.5 1.5 L22.5 4 L20.5 17 L3 15.5Z" fill="#8ccad8"/>
 <path d="M9.5 1.5 L22.5 4 L19 8 L6 7Z" fill="#c8eaf0" opacity=".7"/>
 <path d="M22.5 4 L23.5 5 L20.5 22.5 L19.5 22.5Z" fill="#d8a040"/>
 <path d="M9.5 1.5 L22.5 4" stroke="#9a9a9a" stroke-width="1.5" stroke-dasharray="1 1"/>
</svg>
<svg style="left:210px;top:737px" width="24" height="24" viewBox="0 0 24 24">
 <rect x="6" y="0" width="18" height="5" fill="#41a5ee"/>
 <rect x="6" y="5" width="18" height="5.5" fill="#2b7cd3"/>
 <rect x="6" y="10.5" width="18" height="5" fill="#185abd"/>
 <rect x="6" y="15.5" width="18" height="5" fill="#103f91"/>
 <rect x="0" y="5" width="12" height="12" fill="#185abd"/>
 <path d="M1.8 7.4 H3.3 L4.2 12.2 L5.3 7.4 H6.6 L7.7 12.2 L8.6 7.4 H10.1 L8.5 14.6 H7.1 L6 9.8 L4.8 14.6 H3.5Z" fill="#fff"/>
</svg>
<div class="a" style="left:202px;top:766px;width:40px;height:2px;background:#8fc5ec"></div>
<div class="a" style="left:247px;top:728px;width:48px;height:40px;background:rgba(40,120,200,.45)"></div>
<div class="a" style="left:247px;top:766px;width:48px;height:2px;background:#99c9ec"></div>
<svg style="left:260px;top:739px" width="22" height="18" viewBox="0 0 22 18">
 <path d="M0 0 H7.5 L9 1.5 H21.5 V17.5 H0Z" fill="#f0a800"/>
 <rect x="0" y="2.5" width="21.5" height="15" fill="#ffd35a"/>
 <path d="M5 9.5 H16.5 V17.5 H13.5 V12.5 H8 V17.5 H5Z" fill="#4a9ae0"/>
</svg>
<svg style="left:1086px;top:740px" width="15" height="15" viewBox="0 0 15 15">
 <circle cx="9.8" cy="3.6" r="3" fill="none" stroke="#fff" stroke-width="1.1"/>
 <path d="M6 9.5 Q7.5 7.2 9.8 7.2 Q13 7.2 14.5 10" fill="none" stroke="#fff" stroke-width="1.1"/>
 <circle cx="4.5" cy="8" r="3" fill="none" stroke="#fff" stroke-width="1.1"/>
 <path d="M0.5 14.8 Q1 11.5 4.5 11.5 Q8 11.5 8.5 14.8" fill="none" stroke="#fff" stroke-width="1.1"/>
</svg>
<svg style="left:1122px;top:744px" width="13" height="8" viewBox="0 0 13 8"><path d="M0.5 7.5 L6.5 1 L12.5 7.5" fill="none" stroke="#fff" stroke-width="1.1"/></svg>
<svg style="left:1145px;top:742px" width="17" height="12" viewBox="0 0 17 12">
 <rect x="4.5" y="3" width="11" height="7.5" fill="none" stroke="#fff" stroke-width="1.1"/>
 <rect x="15.6" y="5" width="1.2" height="3.5" fill="#fff"/>
 <rect x="6" y="4.5" width="8" height="4.5" fill="#fff"/>
 <path d="M1 0 V3 M3.5 0 V3 M0 3 H4.5 V5 Q4.5 7 2.3 7 Q0 7 0 5Z M2.3 7 V12" stroke="#fff" stroke-width="1" fill="none"/>
</svg>
<svg style="left:1172px;top:743px" width="13" height="13" viewBox="0 0 13 13">
 <path d="M0.7 12.5 A11.8 11.8 0 0 1 12.3 0.7 M3.3 12.5 A9.2 9.2 0 0 1 12.3 3.3 M6 12.5 A6.5 6.5 0 0 1 12.3 6" fill="none" stroke="#fff" stroke-width="1"/>
 <circle cx="11" cy="11" r="1.4" fill="#fff"/>
</svg>
<svg style="left:1193px;top:741px" width="17" height="15" viewBox="0 0 17 15">
 <path d="M0.6 5 H3.5 L7.5 1 V14 L3.5 10 H0.6Z" fill="none" stroke="#fff" stroke-width="1.1"/>
 <path d="M10 5 Q11.5 7.5 10 10 M12.3 3.2 Q15 7.5 12.3 11.8 M14.5 1.2 Q18.3 7.5 14.5 13.8" fill="none" stroke="#fff" stroke-width="1.1"/>
</svg>
<div class="t" style="left:1218px;top:741px;color:#fff;letter-spacing:-0.4px">ENG</div>
<div class="t" style="left:1259px;top:732px;color:#fff;letter-spacing:-0.3px">4:55 PM</div>
<div class="t" style="left:1255px;top:750px;color:#fff;letter-spacing:-0.35px">4/13/2021</div>
<svg style="left:1325px;top:740px" width="16" height="16" viewBox="0 0 16 16"><path d="M0.6 0.6 H15.4 V12.8 H10 L8 14.8 L6 12.8 H0.6Z" fill="none" stroke="#fff" stroke-width="1.1"/></svg>
<div class="a" style="left:1361px;top:728px;width:1px;height:40px;background:#7a8aa8"></div>
</body></html>
